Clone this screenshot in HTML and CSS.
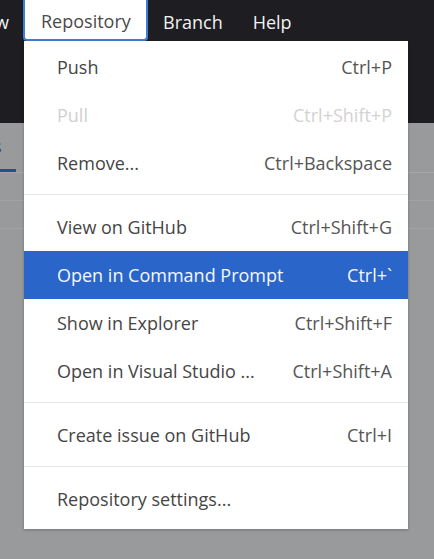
FILE: index.html
```html
<!DOCTYPE html>
<html lang="en">

<head>
    <meta charset="UTF-8">
    <meta name="viewport" content="width=device-width, initial-scale=1.0">
    <title>Repository menu</title>
    <link rel="stylesheet" href="styles.css">
</head>

<body>
    <div class="app">
        <div class="topbar">
            <div class="menubar">
                <span class="menu-title cut">w</span>
                <span class="menu-title open">Repository</span>
                <span class="menu-title">Branch</span>
                <span class="menu-title">Help</span>
            </div>
        </div>

        <div class="tabs">
            <span class="tab active">s</span>
        </div>
        <div class="rows">
            <div class="row"></div>
            <div class="row"></div>
        </div>

        <div class="dropdown">
            <div class="item"><span>Push</span><span class="keys">Ctrl+P</span></div>
            <div class="item disabled"><span>Pull</span><span class="keys">Ctrl+Shift+P</span></div>
            <div class="item"><span>Remove...</span><span class="keys">Ctrl+Backspace</span></div>
            <div class="sep"></div>
            <div class="item"><span>View on GitHub</span><span class="keys">Ctrl+Shift+G</span></div>
            <div class="item selected"><span>Open in Command Prompt</span><span class="keys">Ctrl+`</span></div>
            <div class="item"><span>Show in Explorer</span><span class="keys">Ctrl+Shift+F</span></div>
            <div class="item"><span>Open in Visual Studio ...</span><span class="keys">Ctrl+Shift+A</span></div>
            <div class="sep"></div>
            <div class="item"><span>Create issue on GitHub</span><span class="keys">Ctrl+I</span></div>
            <div class="sep"></div>
            <div class="item"><span>Repository settings...</span></div>
        </div>
    </div>
</body>

</html>
```

FILE: styles.css
```css
body {
    margin: 0;
    font-family: "Open Sans", "Noto Sans", sans-serif;
    background-color: #999a9b;
}

.app {
    position: relative;
    height: 559px;
    overflow: hidden;
}

.topbar {
    height: 123px;
    background-color: #1d1d22;
}

.menubar {
    display: flex;
    height: 41px;
    align-items: stretch;
}

.menu-title {
    display: flex;
    align-items: center;
    padding: 3px 0 0 15px;
    color: #f2f2f2;
    font-size: 18px;
}

.menu-title.cut {
    width: 23px;
    box-sizing: border-box;
    padding: 3px 14px 0 0;
    justify-content: flex-end;
}

.menu-title.open {
    box-sizing: border-box;
    width: 125px;
    padding: 3px 0 0 16px;
    background-color: #fff;
    color: #4a4a4a;
    border: 2px solid #3d7fd8;
    border-top: none;
    border-radius: 0 0 4px 4px;
}

.menu-title.open + .menu-title + .menu-title {
    padding-left: 30px;
}

.tabs {
    height: 49px;
    display: flex;
    align-items: stretch;
    border-bottom: 1px solid #a6a6a6;
}

.tab {
    display: flex;
    align-items: center;
    color: #333;
    font-size: 18px;
    width: 23px;
    margin-left: -11px;
    padding-left: 4px;
}

.tab.active {
    border-bottom: 3px solid #1f4f96;
}

.row {
    height: 27px;
    border-bottom: 1px solid #a3a3a3;
}

.dropdown {
    position: absolute;
    top: 41px;
    left: 24px;
    width: 384px;
    padding: 2px 0 6px;
    background-color: #fff;
    box-shadow: 0 1px 3px rgba(0, 0, 0, 0.25);
}

.item {
    display: flex;
    justify-content: space-between;
    align-items: center;
    height: 48px;
    padding: 0 16px 0 33px;
    color: #454545;
    font-size: 18px;
}

.item.disabled {
    color: #cfcfcf;
}

.item.selected {
    background-color: #2a65c9;
    color: #f4f8ff;
}

.keys {
    color: #555;
}

.disabled .keys {
    color: #d2d2d2;
}

.selected .keys {
    color: #f4f8ff;
}

.sep {
    height: 1px;
    margin: 7px 0 8px;
    background-color: #e6e6e6;
}
```
